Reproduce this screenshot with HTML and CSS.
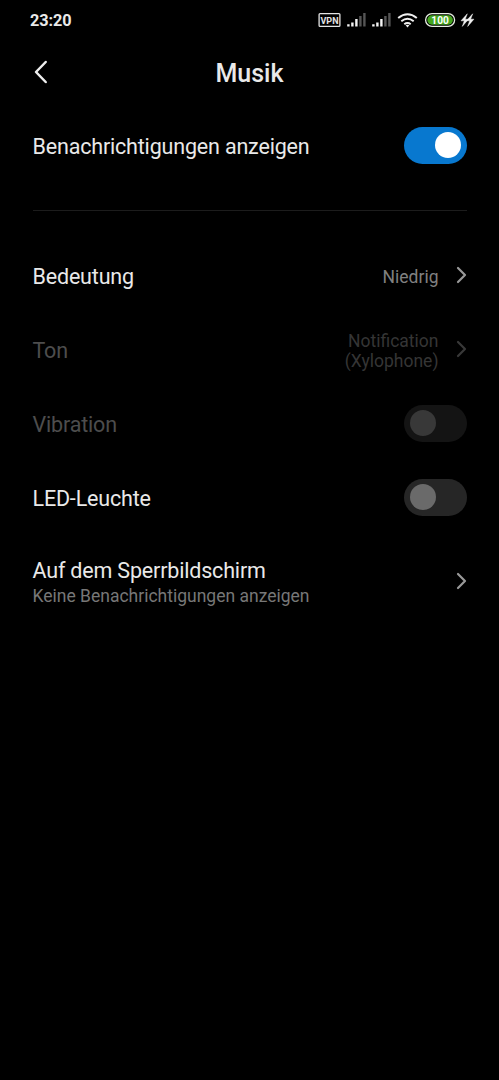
FILE: index.html
```html
<!DOCTYPE html>
<html lang="de">
<head>
<meta charset="utf-8">
<title>Musik</title>
<link rel="stylesheet" href="styles.css">
</head>
<body>
<div class="status">
  <span class="time">23:20</span>
  <svg class="status-icons" width="160" height="24" viewBox="0 0 160 24">
    <rect x="4.1" y="5.6" width="20.8" height="12.8" rx="1" fill="none" stroke="#e4e4e4" stroke-width="1.3"/>
    <text class="vpn" x="14.5" y="15.5" text-anchor="middle" textLength="18" lengthAdjust="spacingAndGlyphs">VPN</text>
    <g id="signal" stroke-width="2.4">
      <path d="M33.4 18.4v-2.2M37.4 18.4v-4M41.4 18.4V11" stroke="#f4f4f4"/>
      <path d="M45.4 18.4V8M49.4 18.4V5" stroke="#555"/>
    </g>
    <use href="#signal" x="25"/>
    <g fill="none" stroke="#f0f0f0" stroke-width="2">
      <path d="M83.2 10Q92.5 2.6 101.8 10"/>
      <path d="M86.3 13.2Q92.5 8.2 98.7 13.2"/>
      <path d="M89.3 16.3Q92.5 13.8 95.7 16.3"/>
    </g>
    <path d="M90.6 17.3Q92.5 16 94.4 17.3L92.5 19.4Z" fill="#f0f0f0"/>
    <rect x="110.6" y="5.6" width="29" height="12.8" rx="6.4" fill="#000" stroke="#e8f0e4" stroke-width="1.3"/>
    <rect x="112.3" y="7.3" width="25.6" height="9.4" rx="4.7" fill="#43a51d"/>
    <text class="charge" x="125.1" y="16" text-anchor="middle" textLength="17.5" lengthAdjust="spacingAndGlyphs">100</text>
    <path d="M152.3 5.8L146 12.8H149.3L147.3 18.4L153.5 11.2H150.2Z" fill="#f2f2f2" stroke="#f2f2f2" stroke-width=".5"/>
    <path d="M157.7 5.8L151.4 12.8H154.7L152.7 18.4L158.9 11.2H155.6Z" fill="#f2f2f2" stroke="#f2f2f2" stroke-width=".5"/>
  </svg>
</div>
<header class="header">
  <svg class="back" width="16" height="24" viewBox="0 0 16 24"><path d="M12.7 2L3 12L12.7 22"/></svg>
  <h1 class="title">Musik</h1>
</header>
<main class="settings">
  <div class="row">
    <span class="label">Benachrichtigungen anzeigen</span>
    <span class="toggle toggle-on"></span>
  </div>
  <div class="divider"></div>
  <div class="row">
    <span class="label">Bedeutung</span>
    <span class="value">Niedrig</span>
    <svg class="chevron" width="12" height="18" viewBox="0 0 12 18"><path d="M3 2L10 9L3 16"/></svg>
  </div>
  <div class="row disabled">
    <span class="label">Ton</span>
    <span class="value">Notification<br>(Xylophone)</span>
    <svg class="chevron" width="12" height="18" viewBox="0 0 12 18"><path d="M3 2L10 9L3 16"/></svg>
  </div>
  <div class="row disabled">
    <span class="label">Vibration</span>
    <span class="toggle"></span>
  </div>
  <div class="row">
    <span class="label">LED-Leuchte</span>
    <span class="toggle"></span>
  </div>
  <div class="row row-double">
    <div class="labels">
      <span class="label">Auf dem Sperrbildschirm</span>
      <span class="sub">Keine Benachrichtigungen anzeigen</span>
    </div>
    <svg class="chevron" width="12" height="18" viewBox="0 0 12 18"><path d="M3 2L10 9L3 16"/></svg>
  </div>
</main>
</body>
</html>
```
FILE: styles.css
```css
* { box-sizing: border-box; }
body {
  margin: 0;
  height: 1080px;
  background: #000;
  color: #e9e9e9;
  font-family: Roboto, "Noto Sans", sans-serif;
  overflow: hidden;
}
.status {
  display: flex;
  align-items: center;
  justify-content: space-between;
  height: 40px;
  padding: 0 24px 0 30px;
}
.time { font-size: 16.3px; font-weight: 700; line-height: 20px; padding-top: 2px; letter-spacing: -0.1px; }
.vpn { font-size: 9.5px; font-weight: 700; fill: #e4e4e4; }
.charge { font-size: 11.5px; font-weight: 700; fill: #fff; }
.header {
  display: grid;
  grid-template-columns: 16px 1fr 16px;
  align-items: center;
  height: 64px;
  padding: 0 32.5px;
}
.back path { fill: none; stroke: #eee; stroke-width: 2.5; stroke-linecap: round; stroke-linejoin: round; }
.title { margin: 0; font-size: 25px; font-weight: 500; line-height: 30px; text-align: center; padding-top: 3px; }
.settings { padding: 4.5px 32.5px 0; }
.row { display: flex; align-items: center; height: 73.9px; }
.row-double { height: 94px; }
.label { flex: 1; font-size: 21.5px; letter-spacing: -0.18px; line-height: 26px; white-space: nowrap; padding-top: 3px; }
.labels { flex: 1; display: flex; flex-direction: column; padding-top: 2px; }
.labels .label { padding-top: 0; }
.sub { font-size: 17.5px; line-height: 22px; color: #777; padding-top: 1px; white-space: nowrap; }
.value { font-size: 17.5px; line-height: 20px; color: #808080; text-align: right; padding-top: 3px; }
.chevron { margin-left: 16px; }
.chevron path { fill: none; stroke: #999; stroke-width: 2.2; stroke-linecap: round; stroke-linejoin: round; }
.divider { height: 1px; margin: 27.6px 0 27.5px; background: #1c1c1c; }
.toggle {
  display: flex;
  align-items: center;
  width: 62.5px;
  height: 37px;
  padding: 0 5.5px;
  border-radius: 18.5px;
  background: #262626;
}
.toggle::before { content: ""; width: 26px; height: 26px; border-radius: 50%; background: #6a6a6a; }
.toggle-on { justify-content: flex-end; background: #0878cf; }
.toggle-on::before { background: #fff; }
.disabled .label { color: #4d4d4d; }
.disabled .value { color: #353535; }
.disabled .chevron path { stroke: #383838; }
.disabled .toggle { background: #141414; }
.disabled .toggle::before { background: #383838; }
```
